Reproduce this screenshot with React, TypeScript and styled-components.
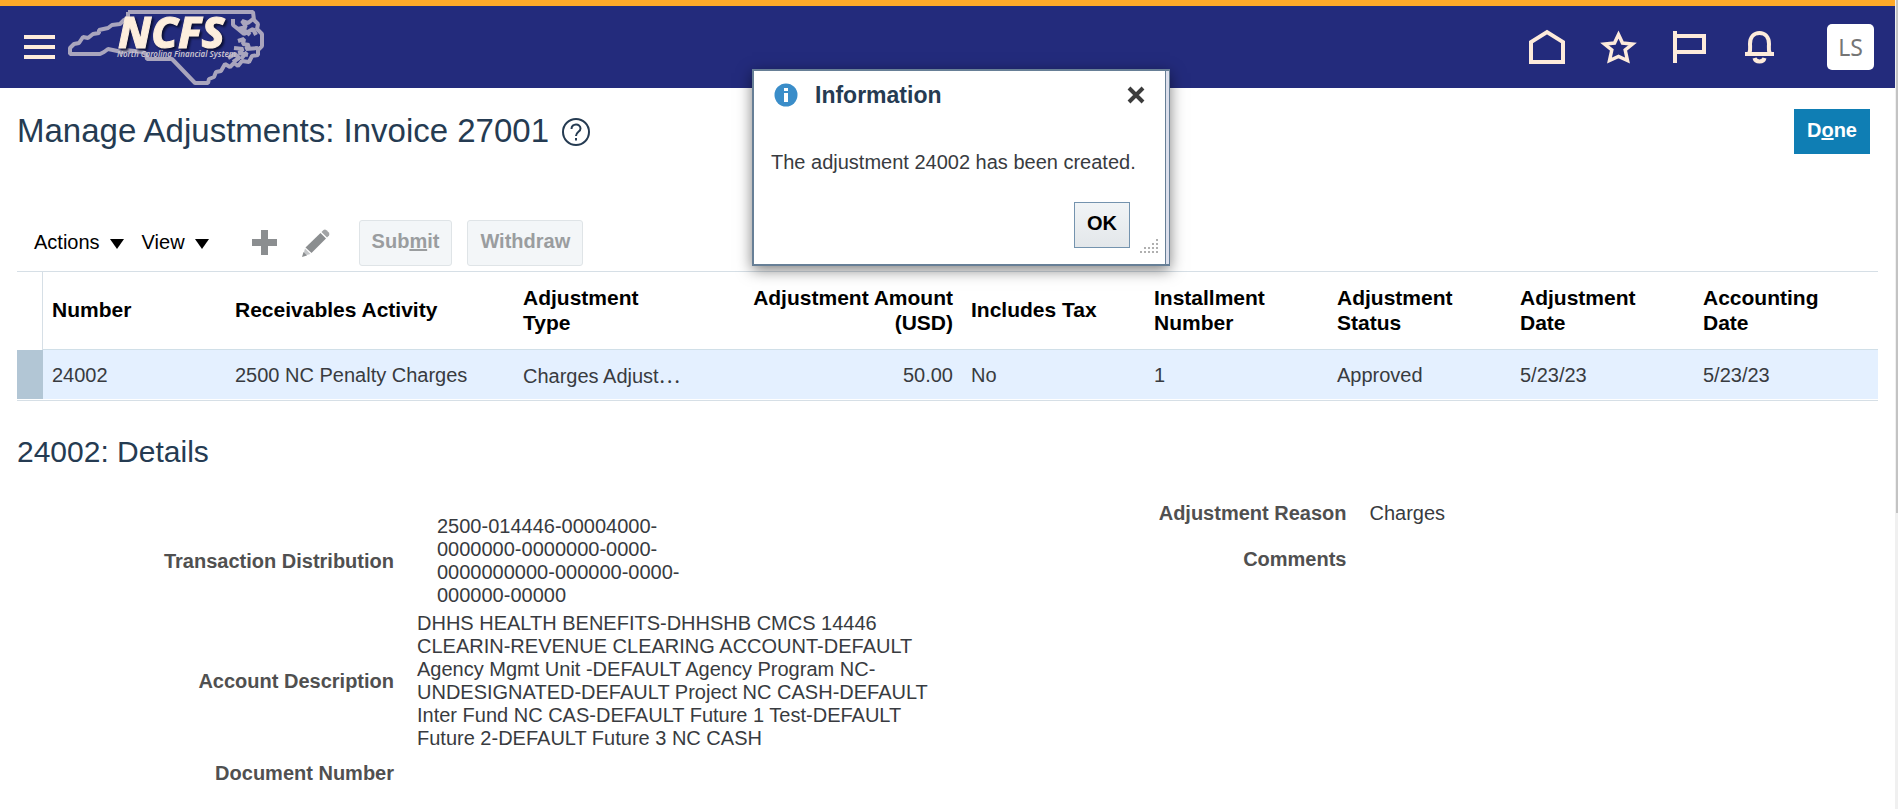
import React from "react";
import styled, { createGlobalStyle } from "styled-components";

const GlobalStyle = createGlobalStyle`
  *, *::before, *::after { box-sizing: border-box; }
  body {
    margin: 0;
    background: #fff;
    color: #383b40;
    font-family: "Liberation Sans", Arial, Helvetica, sans-serif;
    font-size: 20px;
    line-height: 23px;
  }
  button { font: inherit; cursor: pointer; }
  h1, h2, p, dl, dd { margin: 0; }
`;

const Shell = styled.div`
  display: flex;
  min-height: 100vh;
`;

const Page = styled.div`
  flex: 1;
  min-width: 0;
`;

const ScrollTrack = styled.div`
  width: 3px;
  background: #f0f0f0;
  padding-left: 1px;
`;

const ScrollThumb = styled.div`
  height: 513px;
  background: #c3c3c3;
`;

const TopBar = styled.header`
  display: flex;
  align-items: center;
  height: 88px;
  padding: 0 21px 0 24px;
  border-top: 6px solid #ffa929;
  background: #232b7c;
`;

const IconButton = styled.button`
  display: flex;
  align-items: center;
  justify-content: center;
  padding: 0;
  border: 0;
  background: none;
  color: #fdebdb;
`;

const LogoLink = styled.a`
  display: flex;
  margin-left: 11px;
`;

const LogoName = styled.text`
  font-size: 43px;
  font-weight: 800;
  fill: #fdeedd;
  stroke: #fdeedd;
  filter: drop-shadow(2px 2px 1px #0b0f33);
`;

const HeaderActions = styled.nav`
  display: flex;
  gap: 31px;
  margin-left: auto;
`;

const Avatar = styled.button`
  width: 47px;
  height: 46px;
  margin-left: 47px;
  padding: 0;
  border: 0;
  border-radius: 5px;
  background: #fff;
  color: #757575;
  font-family: "Noto Sans", "Open Sans", sans-serif;
  font-size: 23px;
`;

const Content = styled.main`
  padding: 0 17px;
`;

const TitleRow = styled.div`
  display: flex;
  align-items: flex-start;
  height: 114px;
  padding: 21px 8px 0 0;
`;

const Title = styled.h1`
  color: #253b52;
  font-size: 33px;
  line-height: 44px;
  font-weight: 400;
`;

const HelpButton = styled(IconButton)`
  margin: 8px 0 0 12px;
  color: #253b52;
`;

const DoneButton = styled.button`
  height: 45px;
  margin-left: auto;
  padding: 0 13px 2px;
  border: 0;
  background: #0f7eb4;
  color: #fff;
  font-weight: 700;
`;

const Toolbar = styled.div`
  display: flex;
  align-items: center;
  height: 69px;
  padding: 12px 0 0 17px;
`;

const MenuButton = styled.button`
  display: flex;
  align-items: center;
  gap: 10px;
  margin-right: 18px;
  padding: 0;
  border: 0;
  background: none;
  color: #000;

  svg { margin-top: 3px; }
`;

const ToolIcons = styled.div`
  display: flex;
  align-items: center;
  gap: 25px;
  margin: 0 29px 0 25px;
`;

const ToolButton = styled.button`
  height: 46px;
  margin-right: 15px;
  padding: 0 12px 2px;
  border: 1px solid #dfe4e7;
  border-radius: 3px;
  background: #f3f6f8;
  color: #9a9d9f;
  font-weight: 700;
`;

const Table = styled.table`
  width: 100%;
  table-layout: fixed;
  border-collapse: separate;
  border-spacing: 0;
  border-top: 1px solid #d6dfe6;
  border-bottom: 1px solid #d6dfe6;
  padding-bottom: 1px;
`;

const HeadCell = styled.th<{ $end?: boolean }>`
  height: 78px;
  padding: 0 9px 2px;
  border-bottom: 1px solid #d0dfe8;
  color: #000;
  font-size: 21px;
  line-height: 25px;
  text-align: ${(p) => (p.$end ? "right" : "left")};
`;

const Cell = styled.td<{ $end?: boolean }>`
  height: 49px;
  padding: 1px 9px 0;
  background: #e4f0ff;
  text-align: ${(p) => (p.$end ? "right" : "left")};
  white-space: nowrap;
`;

const HandleHead = styled.td`
  border-right: 1px solid #d6dfe6;
`;

const HandleCell = styled.td`
  background: #b2c6d5;
`;

const Ellipsis = styled.span`
  font-family: "Noto Sans CJK SC", sans-serif;
`;

const SectionTitle = styled.h2`
  margin-top: 33px;
  color: #253b52;
  font-size: 30px;
  line-height: 36px;
  font-weight: 400;
`;

const Details = styled.div`
  display: grid;
  grid-template-columns: 1fr 1fr;
  align-items: start;
`;

const FieldList = styled.dl<{ $label: number; $top: number; $row: number; $gap: number }>`
  display: grid;
  grid-template-columns: ${(p) => p.$label}px auto;
  grid-auto-rows: minmax(${(p) => p.$row}px, auto);
  align-items: center;
  column-gap: 23px;
  row-gap: ${(p) => p.$gap}px;
  padding-top: ${(p) => p.$top}px;
`;

const FieldLabel = styled.dt`
  color: #505050;
  font-weight: 700;
  text-align: right;
`;

const FieldValue = styled.dd<{ $indent?: boolean }>`
  padding-left: ${(p) => (p.$indent ? 20 : 0)}px;
`;

const Dialog = styled.section`
  position: absolute;
  top: 69px;
  left: 752px;
  width: 418px;
  height: 197px;
  padding-right: 3px;
  border: 2px solid #677f96;
  border-right-width: 1px;
  background: #dcdfec;
  box-shadow: 0 4px 14px rgba(0, 0, 0, 0.5);
`;

const DialogBody = styled.div`
  position: relative;
  height: 100%;
  padding: 11px 20px 0 17px;
  border-right: 1px solid #677f96;
  background: #fff;
`;

const DialogHead = styled.div`
  display: flex;
  align-items: center;
  height: 26px;
  padding-left: 3px;
`;

const DialogTitle = styled.h2`
  margin-left: 17px;
  color: #253b52;
  font-size: 23px;
  line-height: 26px;
`;

const CloseButton = styled(IconButton)`
  margin-left: auto;
  color: #3c3c3c;
`;

const Message = styled.p`
  margin-top: 43px;
`;

const DialogFoot = styled.div`
  display: flex;
  justify-content: flex-end;
  margin-top: 28px;
  padding-right: 15px;
`;

const OkButton = styled.button`
  width: 56px;
  height: 46px;
  padding: 0 0 4px;
  border: 1px solid #7493ae;
  background: linear-gradient(#f1f4f6, #e3e7ea);
  color: #000;
  font-weight: 700;
`;

const Grip = styled.svg`
  position: absolute;
  right: 7px;
  bottom: 10px;
`;

const Arrow = () => (
  <svg width="14" height="10" aria-hidden="true">
    <path d="M0 0h14L7 10z" fill="#000" />
  </svg>
);

const Logo = () => (
  <svg width="200" height="94" viewBox="0 -6 200 94" role="img" aria-label="NCFS North Carolina Financial System">
    <g fill="none" stroke="#a9a5bd" strokeLinejoin="bevel">
      <path
        strokeWidth="4"
        d="M62 6H187L188 14L192 18L191 23L196 28V40L192 44V49L186 50L183 56L176 55L172 60L168 57L164 61L159 58L155 65L150 66L148 71L143 73L142 77H129L106 53H81L80 48L77 46L60 44L56 46L42 43L38 46L34 48L4 48V42L8 38L13 37L17 31L22 32L27 28L33 27V24L42 22L46 19L54 18L58 14L62 12V6"
      />
      <path
        strokeWidth="4"
        d="M167 13V19L172 23L180 21L176 15L182 17L187 13M172 23L178 28L187 23L190 29M176 27V22L184 29"
      />
      <path
        strokeWidth="4"
        d="M172 35L178 33L177 38L183 39L180 43L192 42M168 42L177 43L173 47L182 49M162 52L169 48L173 52L167 56M175 53L181 46"
      />
    </g>
    <g fontFamily="'Noto Sans', 'Open Sans', sans-serif" fontStyle="italic">
      <LogoName x="52" y="42">
        NCFS
      </LogoName>
      <text x="51" y="51" fontSize="8" fill="#c9c3cf" fontWeight="600">
        North Carolina Financial System
      </text>
    </g>
  </svg>
);

type Column = { title: string[]; value: React.ReactNode; width: number; end?: boolean };

const columns: Column[] = [
  { title: ["Number"], value: "24002", width: 183 },
  { title: ["Receivables Activity"], value: "2500 NC Penalty Charges", width: 288 },
  { title: ["Adjustment", "Type"], value: <>Charges Adjust<Ellipsis>…</Ellipsis></>, width: 183 },
  { title: ["Adjustment Amount", "(USD)"], value: "50.00", width: 265, end: true },
  { title: ["Includes Tax"], value: "No", width: 183 },
  { title: ["Installment", "Number"], value: "1", width: 183 },
  { title: ["Adjustment", "Status"], value: "Approved", width: 183 },
  { title: ["Adjustment", "Date"], value: "5/23/23", width: 183 },
  { title: ["Accounting", "Date"], value: "5/23/23", width: 184 },
];

const distribution = ["2500-014446-00004000-", "0000000-0000000-0000-", "0000000000-000000-0000-", "000000-00000"];

const description = [
  "DHHS HEALTH BENEFITS-DHHSHB CMCS 14446",
  "CLEARIN-REVENUE CLEARING ACCOUNT-DEFAULT",
  "Agency Mgmt Unit -DEFAULT Agency Program NC-",
  "UNDESIGNATED-DEFAULT Project NC CASH-DEFAULT",
  "Inter Fund NC CAS-DEFAULT Future 1 Test-DEFAULT",
  "Future 2-DEFAULT Future 3 NC CASH",
];

const Lines = ({ items }: { items: string[] }) => (
  <>
    {items.map((line, i) => (
      <React.Fragment key={i}>
        {i > 0 && <br />}
        {line}
      </React.Fragment>
    ))}
  </>
);

// Dots per row of the resize handle, from the top down
const gripDots = [1, 2, 4, 5].flatMap((count, row) =>
  Array.from({ length: count }, (_, i) => ({ x: 16 - i * 4, y: row * 4 + 1 }))
);

export default function App() {
  return (
    <>
      <GlobalStyle />
      <Shell>
        <Page>
          <TopBar>
            <IconButton aria-label="Navigator">
              <svg width="31" height="24" fill="currentColor">
                <path d="M0 0h31v4H0zM0 10h31v4H0zM0 20h31v4H0z" />
              </svg>
            </IconButton>
            <LogoLink href="#" aria-label="NCFS">
              <Logo />
            </LogoLink>
            <HeaderActions>
              <IconButton aria-label="Home">
                <svg width="40" height="40" fill="none" stroke="currentColor" strokeWidth="4">
                  <path d="M4 35V15L20 5L36 15V35Z" />
                </svg>
              </IconButton>
              <IconButton aria-label="Favorites">
                <svg width="40" height="40" fill="none" stroke="currentColor" strokeWidth="3.500">
                  <path d="M20.500 7.500L24.500 16L34.500 17L27.200 23L29.500 33.500L20.500 29.500L11.500 33.500L13.800 23L6.500 17L16.500 16Z" />
                </svg>
              </IconButton>
              <IconButton aria-label="Watchlist">
                <svg width="40" height="40" fill="none" stroke="currentColor" strokeWidth="4">
                  <path d="M6 4V36M6 9H35V25H6" />
                </svg>
              </IconButton>
              <IconButton aria-label="Notifications">
                <svg width="40" height="40" fill="none" stroke="currentColor" strokeWidth="4">
                  <path d="M5 27H34M9 27C11 23 10 20 10 17C10 10 14 6 19.500 6S29 10 29 17C29 20 28 23 30 27" />
                  <path d="M14.500 31C15.500 35.500 23.500 35.500 24.500 31" />
                </svg>
              </IconButton>
            </HeaderActions>
            <Avatar aria-label="Settings and Actions">LS</Avatar>
          </TopBar>

          <Content>
            <TitleRow>
              <Title>Manage Adjustments: Invoice 27001</Title>
              <HelpButton aria-label="Help">
                <svg width="30" height="30" fill="none" stroke="currentColor" strokeWidth="2">
                  <circle cx="15" cy="15" r="13" />
                  <path d="M10.500 12C10.500 6 19.500 6 19.500 11.500C19.500 15 15 14.500 15 19" />
                  <path d="M15 21v2.500" />
                </svg>
              </HelpButton>
              <DoneButton>
                D<u>o</u>ne
              </DoneButton>
            </TitleRow>

            <Toolbar>
              <MenuButton>
                Actions <Arrow />
              </MenuButton>
              <MenuButton>
                View <Arrow />
              </MenuButton>
              <ToolIcons>
                <IconButton aria-label="Create">
                  <svg width="25" height="25" fill="#8b8e90">
                    <path d="M9 0h7v9h9v7h-9v9H9v-9H0V9h9z" />
                  </svg>
                </IconButton>
                <IconButton aria-label="Edit">
                  <svg width="28" height="28">
                    <path d="M3.500 18.500L18.500 4L24 9.500L9.500 24Z" fill="#8b8e90" />
                    <path d="M19.500 3L21.500 1Q23 0 24.500 1.200L26.800 3.500Q28 5 27 6.500L25 8.500Z" fill="#a2a4a6" />
                    <path d="M3 19.500L8.500 25L1 27Z" fill="#c4c6c8" />
                    <path d="M1.500 23L5 26.500L0 28Z" fill="#8b8e90" />
                  </svg>
                </IconButton>
              </ToolIcons>
              <ToolButton disabled>
                Sub<u>m</u>it
              </ToolButton>
              <ToolButton disabled>Withdraw</ToolButton>
            </Toolbar>

            <Table>
              <colgroup>
                <col style={{ width: 26 }} />
                {columns.map((c, i) => (
                  <col key={i} style={{ width: c.width }} />
                ))}
              </colgroup>
              <thead>
                <tr>
                  <HandleHead />
                  {columns.map((c, i) => (
                    <HeadCell key={i} scope="col" $end={c.end}>
                      <Lines items={c.title} />
                    </HeadCell>
                  ))}
                </tr>
              </thead>
              <tbody>
                <tr>
                  <HandleCell />
                  {columns.map((c, i) => (
                    <Cell key={i} $end={c.end}>
                      {c.value}
                    </Cell>
                  ))}
                </tr>
              </tbody>
            </Table>

            <SectionTitle>24002: Details</SectionTitle>
            <Details>
              <FieldList $label={377} $top={45} $row={37} $gap={5}>
                <FieldLabel>Transaction Distribution</FieldLabel>
                <FieldValue $indent>
                  <Lines items={distribution} />
                </FieldValue>
                <FieldLabel>Account Description</FieldLabel>
                <FieldValue>
                  <Lines items={description} />
                </FieldValue>
                <FieldLabel>Document Number</FieldLabel>
                <FieldValue />
              </FieldList>
              <FieldList $label={399} $top={20} $row={46} $gap={0}>
                <FieldLabel>Adjustment Reason</FieldLabel>
                <FieldValue>Charges</FieldValue>
                <FieldLabel>Comments</FieldLabel>
                <FieldValue />
              </FieldList>
            </Details>
          </Content>
        </Page>
        <ScrollTrack>
          <ScrollThumb />
        </ScrollTrack>
      </Shell>

      <Dialog role="dialog" aria-labelledby="dialog-title">
        <DialogBody>
          <DialogHead>
            <svg width="24" height="24" aria-hidden="true">
              <circle cx="12" cy="12" r="11.500" fill="#3a8dc9" />
              <path d="M10 5h4v3h-4zM10 10h4v9h-4z" fill="#fff" />
            </svg>
            <DialogTitle id="dialog-title">Information</DialogTitle>
            <CloseButton aria-label="Close">
              <svg width="18" height="18" stroke="currentColor" strokeWidth="4">
                <path d="M2 2L16 16M16 2L2 16" />
              </svg>
            </CloseButton>
          </DialogHead>
          <Message>The adjustment 24002 has been created.</Message>
          <DialogFoot>
            <OkButton>OK</OkButton>
          </DialogFoot>
          <Grip width="18" height="16" fill="#b0b0b0" aria-hidden="true">
            {gripDots.map((d) => (
              <rect key={`${d.x}-${d.y}`} x={d.x} y={d.y} width="2" height="2" />
            ))}
          </Grip>
        </DialogBody>
      </Dialog>
    </>
  );
}
